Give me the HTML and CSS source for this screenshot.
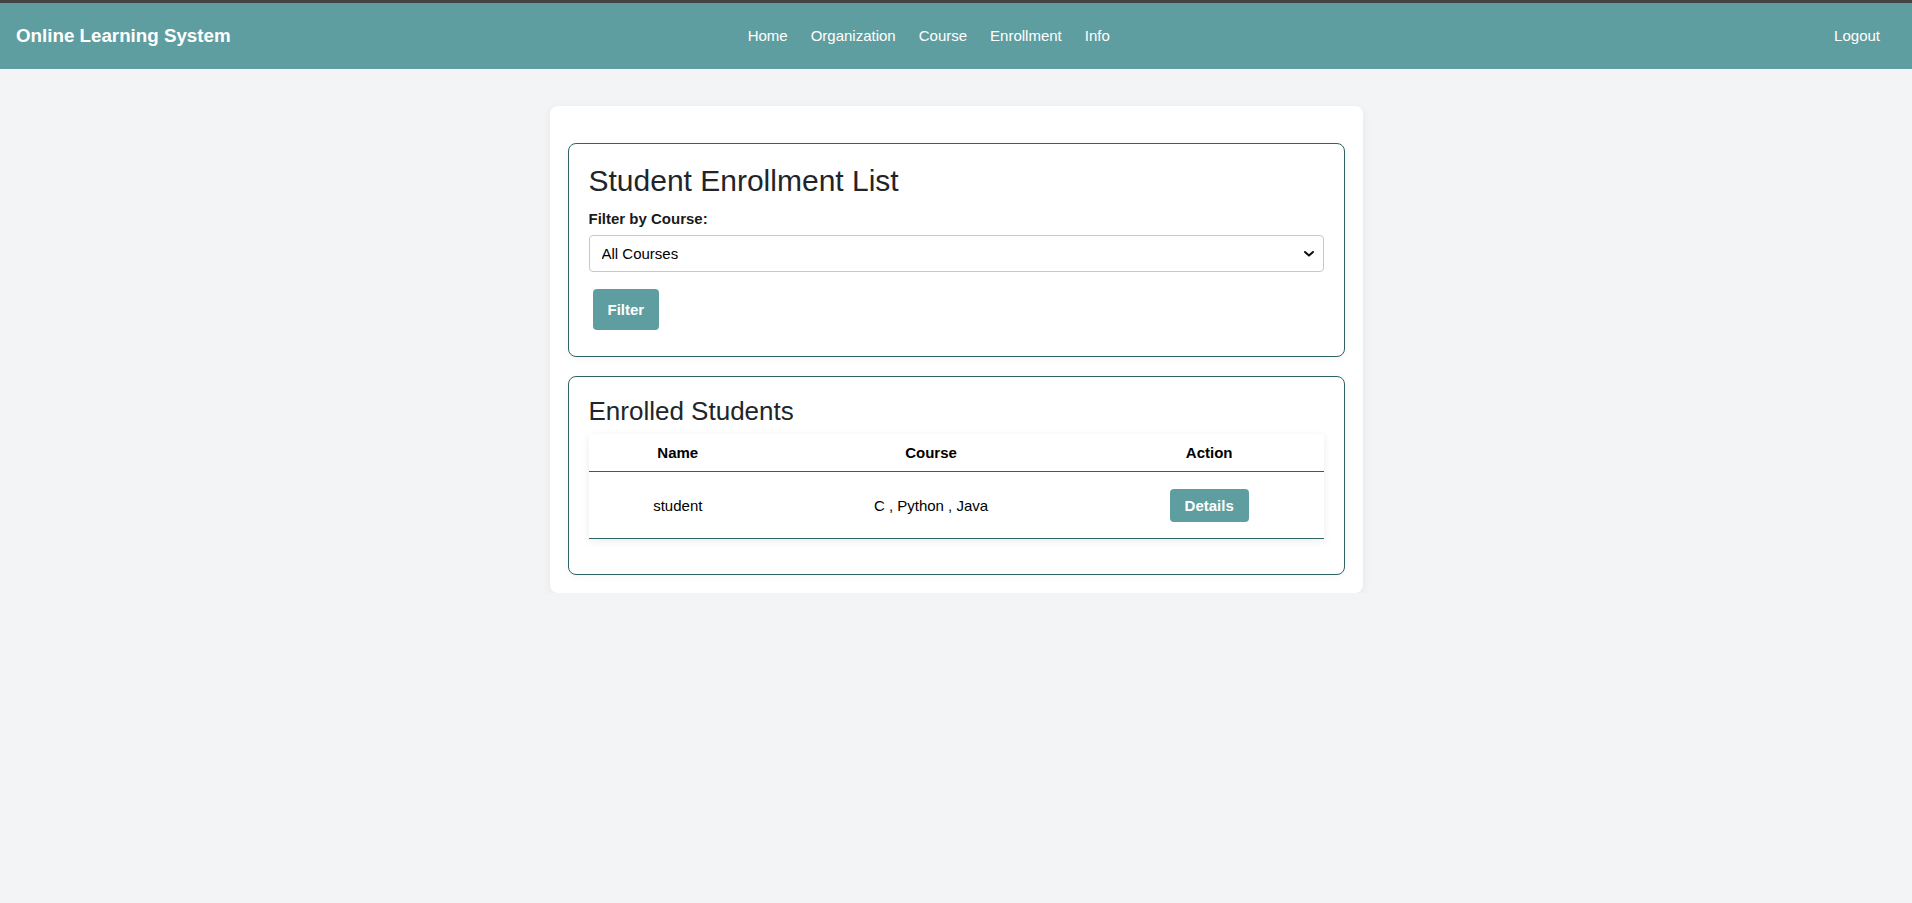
FILE: index.html
```html
<!DOCTYPE html>
<html lang="en">
<head>
<meta charset="utf-8">
<title>Online Learning System</title>
<link rel="stylesheet" href="styles.css">
</head>
<body>
<header class="navbar">
  <div class="brand">Online Learning System</div>
  <nav class="nav-links">
    <a href="#">Home</a>
    <a href="#">Organization</a>
    <a href="#">Course</a>
    <a href="#">Enrollment</a>
    <a href="#">Info</a>
  </nav>
  <a class="logout" href="#">Logout</a>
</header>

<main class="card">
  <section class="panel">
    <h2 class="panel-title">Student Enrollment List</h2>
    <form class="filter-form">
      <label class="filter-label" for="course">Filter by Course:</label>
      <div class="select-wrap">
        <select id="course" class="course-select">
          <option>All Courses</option>
          <option>C</option>
          <option>Python</option>
          <option>Java</option>
        </select>
        <svg class="chevron" width="10" height="6" viewBox="0 0 10 6" aria-hidden="true">
          <path d="M1 1 L5 4.6 L9 1" fill="none" stroke="#111" stroke-width="2" stroke-linecap="round" stroke-linejoin="round"/>
        </svg>
      </div>
      <button type="button" class="btn btn-filter">Filter</button>
    </form>
  </section>

  <section class="panel">
    <h3 class="panel-subtitle">Enrolled Students</h3>
    <table class="students">
      <thead>
        <tr>
          <th class="col-name">Name</th>
          <th class="col-course">Course</th>
          <th class="col-action">Action</th>
        </tr>
      </thead>
      <tbody>
        <tr>
          <td>student</td>
          <td>C , Python , Java</td>
          <td><button type="button" class="btn btn-details">Details</button></td>
        </tr>
      </tbody>
    </table>
  </section>
</main>
</body>
</html>
```

FILE: styles.css
```css
* {
  box-sizing: border-box;
}

body {
  margin: 0;
  background: #f3f4f6;
  font-family: "Liberation Sans", Arial, sans-serif;
  font-size: 15px;
  color: #212529;
}

/* ---------- Navbar ---------- */
.navbar {
  display: flex;
  align-items: center;
  height: 69px;
  padding: 0 32px 0 16px;
  background: #5f9ea0;
  border-top: 3px solid #444;
}

.brand {
  color: #fff;
  font-weight: bold;
  font-size: 18.75px;
}

.nav-links {
  display: flex;
  gap: 23px;
  margin-left: 517px;
  padding-bottom: 2px;
}

.nav-links a,
.logout {
  color: #fff;
  text-decoration: none;
  font-size: 15px;
}

.logout {
  margin-left: auto;
  padding-bottom: 2px;
}

/* ---------- Card ---------- */
.card {
  width: 813px;
  margin: 37px auto 0;
  padding: 18px;
  background: #fff;
  border-radius: 8px;
  box-shadow: 0 2px 10px rgba(0, 0, 0, 0.06);
}

.panel {
  margin-top: 19px;
  padding: 20px;
  border: 1px solid #2f6262;
  border-radius: 8px;
  box-shadow: 0 2px 8px rgba(0, 0, 0, 0.04);
}

.panel-title {
  margin: 0 0 12px;
  font-size: 30px;
  font-weight: normal;
  color: #212529;
}

.panel-subtitle {
  margin: -1px 0 7px;
  font-size: 26px;
  font-weight: normal;
  color: #212529;
}

/* ---------- Filter form ---------- */
.filter-form {
  display: flex;
  flex-direction: column;
  align-items: flex-start;
}

.filter-label {
  font-weight: bold;
  font-size: 15px;
  margin-bottom: 8px;
  color: #1a1a1a;
}

.select-wrap {
  position: relative;
  width: 100%;
}

.course-select {
  display: block;
  width: 100%;
  height: 37px;
  padding: 0 12px;
  border: 1px solid #c8c8c8;
  border-radius: 4px;
  background: #fff;
  font-family: "Liberation Sans", Arial, sans-serif;
  font-size: 15px;
  color: #000;
  appearance: none;
  -webkit-appearance: none;
}

.chevron {
  position: absolute;
  right: 10px;
  top: 16px;
  pointer-events: none;
}

.btn {
  border: none;
  border-radius: 4px;
  background: #5f9ea0;
  color: #fff;
  font-family: "Liberation Sans", Arial, sans-serif;
  font-weight: bold;
  font-size: 15px;
  line-height: normal;
  cursor: pointer;
}

.btn-filter {
  margin: 17px 0 6px 4px;
  padding: 12px 15px;
}

.btn-details {
  padding: 8px 15px;
}

/* ---------- Table ---------- */
.students {
  width: 100%;
  border-collapse: collapse;
  margin-bottom: 15px;
  background: #fff;
  box-shadow: 0 2px 8px rgba(0, 0, 0, 0.08);
}

.students th {
  padding: 10px;
  font-weight: bold;
  color: #000;
  text-align: center;
  border-bottom: 1px solid #2f6262;
}

.students td {
  padding: 16.5px 10px;
  color: #000;
  text-align: center;
  border-bottom: 1px solid #2f6262;
}

.col-name {
  width: 24.3%;
}

.col-course {
  width: 44.6%;
}

.col-action {
  width: 31.1%;
}
```
